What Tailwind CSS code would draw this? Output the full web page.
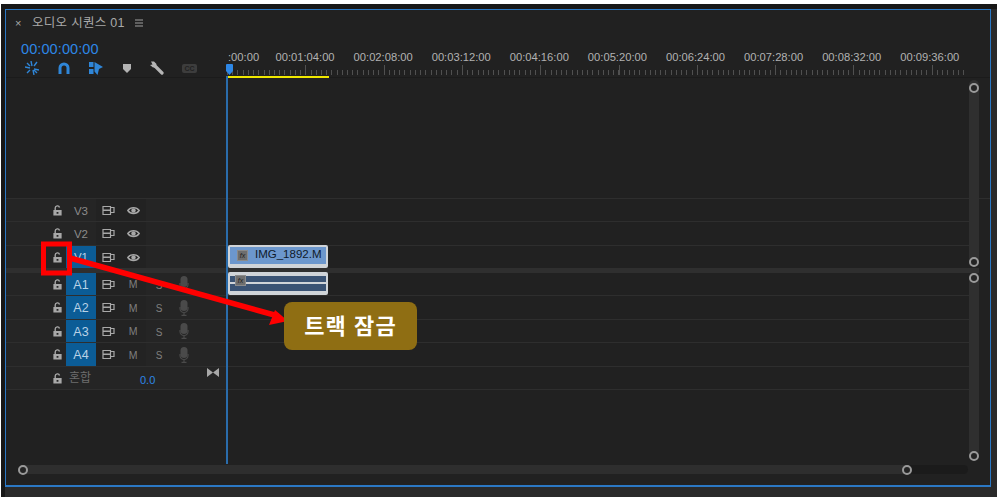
<!DOCTYPE html>
<html lang="ko">
<head>
<meta charset="utf-8"/>
<title>오디오 시퀀스 01</title>
<script src="https://cdn.jsdelivr.net/npm/@tailwindcss/browser@4"></script>
</head>
<body class="bg-white h-[501px] overflow-hidden pt-[4px] pl-[1px] font-['Liberation_Sans','Noto_Sans_CJK_KR',sans-serif]">

<svg class="hidden">
  <symbol id="lock" viewBox="0 0 12 12">
    <path d="M3.500 6V3.400a2.400 2.400 0 0 1 4.700-.7" fill="none" stroke="currentColor" stroke-width="1.500"/>
    <path fill-rule="evenodd" d="M1.500 5.500h9v6h-9z M5 7.500v2h2v-2z" fill="currentColor"/>
  </symbol>
  <symbol id="output" viewBox="0 0 13 11">
    <path d="M1 1.500h7.500v3.500H1z M1 5.500h7.500V9.500H1z M8.500 2.500h3.500v5H8.500z" fill="none" stroke="currentColor" stroke-width="1.200"/>
  </symbol>
  <symbol id="eye" viewBox="0 0 13 9">
    <path d="M.8 4.500C3.500.6 9.500.6 12.200 4.500 9.500 8.400 3.500 8.400.8 4.500z" fill="none" stroke="currentColor" stroke-width="1.400"/>
    <circle cx="6.500" cy="4.500" r="2.200" fill="currentColor"/>
  </symbol>
  <symbol id="mic" viewBox="0 0 10 16">
    <rect x="1.500" y="0" width="7" height="11" rx="3.500" fill="currentColor"/>
    <path d="M1 7v1.500a4 4 0 0 0 8 0V7M5 12.500V15M2.500 15.300h5" fill="none" stroke="currentColor" stroke-width="1.200"/>
  </symbol>
</svg>

<div class="w-[996px] h-[493px] bg-[#2a2a2a] border-l-[4px] border-t-[5px] border-[#171717]">
  <div class="relative w-[986px] h-[478px] bg-[#212121] border border-b-2 border-[#2b78c4] flex flex-col">

    <!-- top: title, timecode, ruler -->
    <div class="flex h-[67px] shrink-0">
      <div class="w-[221px] shrink-0">
        <div class="flex items-center h-[26px] pl-[9px] text-[#a9a9a9]">
          <span class="w-[17px] text-[11px]">×</span>
          <span class="text-[12.500px] tracking-[0.3px] whitespace-nowrap">오디오 시퀀스 01</span>
          <svg class="ml-[10px]" width="8" height="8" viewBox="0 0 8 8"><path d="M0 1h8M0 4h8M0 7h8" stroke="#a0a0a0" stroke-width="1"/></svg>
        </div>
        <div class="pl-[15px] h-[20px] mt-[3px] text-[14.500px] leading-[20px] text-[#2d87e6] tracking-[0.1px]">00:00:00:00</div>
        <div class="flex items-center h-[14px] mt-[2px] relative">
          <svg class="ml-[19px]" width="14" height="14" viewBox="0 0 14 14" fill="none" stroke="#2f86d8" stroke-width="1.400"><path d="M6 0l1 5M8 9l1 5M0 6l5 1M9 8l5 1M2 2l3 3M12 1L9 5M2 12l3-3M12 12L9 9"/></svg>
          <svg class="ml-[19px]" width="12" height="12" viewBox="0 0 12 12" fill="none"><path d="M2 12V6a4 4 0 0 1 8 0v6" stroke="#2f86d8" stroke-width="3"/></svg>
          <svg class="ml-[19px]" width="14" height="13" viewBox="0 0 14 13"><path d="M0 0h4.500v5H0zM0 7h4.500v5H0z" fill="#2f86d8"/><path d="M5.500 0L14 5l-4 2-1.500 6-3-3.500z" fill="#2f86d8"/></svg>
          <svg class="ml-[20px]" width="8" height="9" viewBox="0 0 8 9"><path d="M0 0h8v5L4 9 0 5z" fill="#b3b3b3"/></svg>
          <svg class="ml-[19px]" width="14" height="14" viewBox="0 0 14 14"><path d="M5 5l7 7" stroke="#b5b5b5" stroke-width="3.200" stroke-linecap="round"/><path d="M1 .5h3l2.500 2.500-.5 3-3 .5L0 4l2.500-.5z" fill="#b5b5b5"/></svg>
          <div class="ml-[18px] w-[15px] h-[9px] rounded-[2px] bg-[#3d3d3d] text-[7px] leading-[9px] font-bold text-center text-[#222]">CC</div>
        </div>
      </div>
      <div class="flex-1 relative">
        <div class="flex h-[54px] pt-[40px] pl-[1px] text-[11.200px] leading-[14px] text-[#b2b2b2] whitespace-nowrap">
          <span class="w-[38px]">:00:00</span>
          <span class="w-[78.100px] text-center">00:01:04:00</span>
          <span class="w-[78.100px] text-center">00:02:08:00</span>
          <span class="w-[78.100px] text-center">00:03:12:00</span>
          <span class="w-[78.100px] text-center">00:04:16:00</span>
          <span class="w-[78.100px] text-center">00:05:20:00</span>
          <span class="w-[78.100px] text-center">00:06:24:00</span>
          <span class="w-[78.100px] text-center">00:07:28:00</span>
          <span class="w-[78.100px] text-center">00:08:32:00</span>
          <span class="w-[78.100px] text-center">00:09:36:00</span>
        </div>
        <div class="w-[740px] h-[5px] mt-[6px] bg-[repeating-linear-gradient(90deg,#505050_0,#505050_1px,transparent_1px,transparent_5.220px)]"></div>
        <div class="absolute left-0 top-[55px] w-[740px] h-[10px] bg-[repeating-linear-gradient(90deg,#505050_0,#505050_1px,transparent_1px,transparent_78.300px)]"></div>
        <div class="absolute left-0 top-[66px] w-[102px] h-[2px] bg-[#f0e800]"></div>
      </div>
    </div>

    <!-- empty video space -->
    <div class="h-[122px] shrink-0 border-b border-[#2e2e2e] border-t border-t-[#1b1b1b]"></div>

    <!-- V3 -->
    <div class="flex h-[23px] shrink-0 border-b border-[#2e2e2e] mr-[21px]">
      <div class="w-[221px] flex items-stretch bg-[#252525] text-[#a8a8a8]">
        <div class="w-[60px] flex items-center justify-end pr-[3px]"><svg width="11" height="11"><use href="#lock"/></svg></div>
        <div class="w-[30px] pt-[3px] flex items-center justify-center text-[11.500px] text-[#8c8c8c]">V3</div>
        <div class="w-[24px] flex items-center justify-center bg-[#222]"><svg width="13" height="11"><use href="#output"/></svg></div>
        <div class="w-[26px] flex items-center justify-center bg-[#222]"><svg width="13" height="9"><use href="#eye"/></svg></div>
      </div>
      <div class="flex-1"></div>
    </div>
    <!-- V2 -->
    <div class="flex h-[24px] shrink-0 border-b border-[#2e2e2e] mr-[21px]">
      <div class="w-[221px] flex items-stretch bg-[#252525] text-[#a8a8a8]">
        <div class="w-[60px] flex items-center justify-end pr-[3px]"><svg width="11" height="11"><use href="#lock"/></svg></div>
        <div class="w-[30px] pt-[2px] flex items-center justify-center text-[11.500px] text-[#8c8c8c]">V2</div>
        <div class="w-[24px] flex items-center justify-center bg-[#222]"><svg width="13" height="11"><use href="#output"/></svg></div>
        <div class="w-[26px] flex items-center justify-center bg-[#222]"><svg width="13" height="9"><use href="#eye"/></svg></div>
      </div>
      <div class="flex-1"></div>
    </div>
    <!-- V1 -->
    <div class="flex h-[22px] shrink-0 mr-[21px]">
      <div class="w-[221px] flex items-stretch bg-[#252525] text-[#a8a8a8]">
        <div class="w-[60px] flex items-center justify-end pr-[3px]"><svg width="11" height="11"><use href="#lock"/></svg></div>
        <div class="w-[30px] pt-[2px] flex items-center justify-center text-[11.500px] bg-[#0b5c96] text-[#b9d2e6]">V1</div>
        <div class="w-[24px] flex items-center justify-center bg-[#222]"><svg width="13" height="11"><use href="#output"/></svg></div>
        <div class="w-[26px] flex items-center justify-center bg-[#222]"><svg width="13" height="9"><use href="#eye"/></svg></div>
      </div>
      <div class="flex-1">
        <div class="relative ml-[1px] -mt-[1px] w-[100px] h-[23px] bg-[#6c97cd] border-2 border-b-4 border-[#d0d4d8] rounded-[2px] overflow-hidden">
          <div class="absolute left-[7px] top-[3px] w-[11px] h-[11px] bg-[#6e6e6e] border border-[#8a8a8a] text-[7px] leading-[9px] italic text-center text-[#222]">fx</div>
          <div class="absolute left-[25px] top-0 text-[11.500px] leading-[15px] text-[#0f1a2a] whitespace-nowrap">IMG_1892.M</div>
        </div>
      </div>
    </div>

    <!-- divider -->
    <div class="h-[5px] shrink-0 bg-[#2f2f2f] mr-[11px]"></div>

    <!-- A1 -->
    <div class="flex h-[23px] shrink-0 border-b border-[#2e2e2e] mr-[21px]">
      <div class="w-[221px] flex items-stretch bg-[#252525] text-[#a8a8a8]">
        <div class="w-[60px] flex items-center justify-end pr-[3px]"><svg width="11" height="11"><use href="#lock"/></svg></div>
        <div class="w-[30px] pt-[2px] flex items-center justify-center text-[12.500px] bg-[#0b5c96] text-[#b9d2e6]">A1</div>
        <div class="w-[24px] flex items-center justify-center bg-[#222]"><svg width="13" height="11"><use href="#output"/></svg></div>
        <div class="w-[26px] pt-[2px] flex items-center justify-center bg-[#232323] text-[10.500px] text-[#7f7f7f]">M</div>
        <div class="w-[26px] pt-[2px] flex items-center justify-center text-[10px] text-[#7f7f7f]">S</div>
        <div class="w-[24px] flex items-center justify-center text-[#4a4a4a]"><svg width="10" height="16"><use href="#mic"/></svg></div>
      </div>
      <div class="flex-1">
        <div class="relative ml-[1px] -mt-[1px] w-[100px] h-[23px] bg-[#d0d4d8] rounded-[2px] overflow-hidden pt-[4px] px-[2px]">
          <div class="h-[6px] bg-[#3a5374]"></div>
          <div class="h-[7px] mt-[2px] bg-[#3a5374]"></div>
          <div class="absolute left-[7px] top-[3px] w-[11px] h-[11px] bg-[#6e6e6e] border border-[#8a8a8a] text-[7px] leading-[9px] italic text-center text-[#222]">fx</div>
        </div>
      </div>
    </div>
    <!-- A2 -->
    <div class="flex h-[24px] shrink-0 border-b border-[#2e2e2e] mr-[21px]">
      <div class="w-[221px] flex items-stretch bg-[#252525] text-[#a8a8a8]">
        <div class="w-[60px] flex items-center justify-end pr-[3px]"><svg width="11" height="11"><use href="#lock"/></svg></div>
        <div class="w-[30px] pt-[2px] flex items-center justify-center text-[12.500px] bg-[#0b5c96] text-[#b9d2e6]">A2</div>
        <div class="w-[24px] flex items-center justify-center bg-[#222]"><svg width="13" height="11"><use href="#output"/></svg></div>
        <div class="w-[26px] pt-[2px] flex items-center justify-center bg-[#232323] text-[10.500px] text-[#7f7f7f]">M</div>
        <div class="w-[26px] pt-[2px] flex items-center justify-center text-[10px] text-[#7f7f7f]">S</div>
        <div class="w-[24px] flex items-center justify-center text-[#4a4a4a]"><svg width="10" height="16"><use href="#mic"/></svg></div>
      </div>
      <div class="flex-1"></div>
    </div>
    <!-- A3 -->
    <div class="flex h-[23px] shrink-0 border-b border-[#2e2e2e] mr-[21px]">
      <div class="w-[221px] flex items-stretch bg-[#252525] text-[#a8a8a8]">
        <div class="w-[60px] flex items-center justify-end pr-[3px]"><svg width="11" height="11"><use href="#lock"/></svg></div>
        <div class="w-[30px] pt-[2px] flex items-center justify-center text-[12.500px] bg-[#0b5c96] text-[#b9d2e6]">A3</div>
        <div class="w-[24px] flex items-center justify-center bg-[#222]"><svg width="13" height="11"><use href="#output"/></svg></div>
        <div class="w-[26px] pt-[2px] flex items-center justify-center bg-[#232323] text-[10.500px] text-[#7f7f7f]">M</div>
        <div class="w-[26px] pt-[2px] flex items-center justify-center text-[10px] text-[#7f7f7f]">S</div>
        <div class="w-[24px] flex items-center justify-center text-[#4a4a4a]"><svg width="10" height="16"><use href="#mic"/></svg></div>
      </div>
      <div class="flex-1"></div>
    </div>
    <!-- A4 -->
    <div class="flex h-[24px] shrink-0 border-b border-[#2e2e2e] mr-[21px]">
      <div class="w-[221px] flex items-stretch bg-[#252525] text-[#a8a8a8]">
        <div class="w-[60px] flex items-center justify-end pr-[3px]"><svg width="11" height="11"><use href="#lock"/></svg></div>
        <div class="w-[30px] pt-[2px] flex items-center justify-center text-[12.500px] bg-[#0b5c96] text-[#b9d2e6]">A4</div>
        <div class="w-[24px] flex items-center justify-center bg-[#222]"><svg width="13" height="11"><use href="#output"/></svg></div>
        <div class="w-[26px] pt-[2px] flex items-center justify-center bg-[#232323] text-[10.500px] text-[#7f7f7f]">M</div>
        <div class="w-[26px] pt-[2px] flex items-center justify-center text-[10px] text-[#7f7f7f]">S</div>
        <div class="w-[24px] flex items-center justify-center text-[#4a4a4a]"><svg width="10" height="16"><use href="#mic"/></svg></div>
      </div>
      <div class="flex-1"></div>
    </div>
    <!-- mix -->
    <div class="flex h-[23px] shrink-0 border-b border-[#2e2e2e] mr-[21px]">
      <div class="w-[221px] flex items-center bg-[#252525] text-[#a8a8a8]">
        <div class="w-[57px] flex justify-end"><svg width="11" height="11"><use href="#lock"/></svg></div>
        <div class="ml-[6px] w-[40px] text-[12px] text-[#6e6e6e]">혼합</div>
        <div class="ml-[31px] w-[67px] text-[11px] text-[#2d87e6] pt-[5px]">0.0</div>
        <svg class="-mt-[11px]" width="12" height="9" viewBox="0 0 12 9"><path d="M0 0l6 4.500L0 9zM12 0L6 4.500 12 9z" fill="#a8a8a8"/></svg>
      </div>
      <div class="flex-1"></div>
    </div>

    <!-- playhead -->
    <div class="absolute left-[220px] top-[66px] w-[2px] h-[388px] bg-[#2a6cab]"></div>
    <svg class="absolute left-[220px] top-[54px]" width="7" height="12" viewBox="0 0 7 12"><path d="M0 1q0-1 1-1h5q1 0 1 1v6l-3.500 4L0 7z" fill="#2d87e6"/></svg>

    <!-- scrollbars -->
    <div class="absolute left-[963px] top-[70px] w-[10px] h-[183px] bg-[#2f2f2f] rounded-[5px]"></div>
    <div class="absolute left-[963px] top-[262px] w-[10px] h-[184px] bg-[#2f2f2f] rounded-[5px]"></div>
    <div class="absolute left-[12px] top-[455px] w-[950px] h-[9px] bg-[#1b1b1b] rounded-[5px]"></div>
    <div class="absolute left-[12px] top-[455px] w-[890px] h-[9px] bg-[#2e2e2e] rounded-[5px]"></div>
    <div class="absolute left-[963px] top-[73px] w-[10px] h-[10px] rounded-full border-2 border-[#9a9a9a] bg-[#242424]"></div>
    <div class="absolute left-[963px] top-[247px] w-[10px] h-[10px] rounded-full border-2 border-[#9a9a9a] bg-[#242424]"></div>
    <div class="absolute left-[963px] top-[263px] w-[10px] h-[10px] rounded-full border-2 border-[#9a9a9a] bg-[#242424]"></div>
    <div class="absolute left-[963px] top-[441px] w-[10px] h-[10px] rounded-full border-2 border-[#9a9a9a] bg-[#242424]"></div>
    <div class="absolute left-[12px] top-[455px] w-[10px] h-[10px] rounded-full border-2 border-[#9a9a9a] bg-[#242424]"></div>
    <div class="absolute left-[896px] top-[455px] w-[10px] h-[10px] rounded-full border-2 border-[#9a9a9a] bg-[#242424]"></div>

    <!-- annotation -->
    <svg class="absolute -left-[6px] -top-[10px] pointer-events-none" width="1000" height="501" viewBox="0 0 1000 501">
      <path d="M70 258L278 316" stroke="#ff0000" stroke-width="5.500" fill="none"/>
      <path d="M275 310L288 321 269 325z" fill="#ff0000"/>
      <rect x="43.500" y="244" width="26" height="29" fill="none" stroke="#ff0000" stroke-width="5"/>
    </svg>
    <div class="absolute left-[278px] top-[292px] w-[133px] h-[48px] rounded-[8px] bg-[#8f6e13] flex items-center justify-center text-white text-[22px] font-bold tracking-[1.100px]">트랙 잠금</div>
  </div>
</div>
</body>
</html>
